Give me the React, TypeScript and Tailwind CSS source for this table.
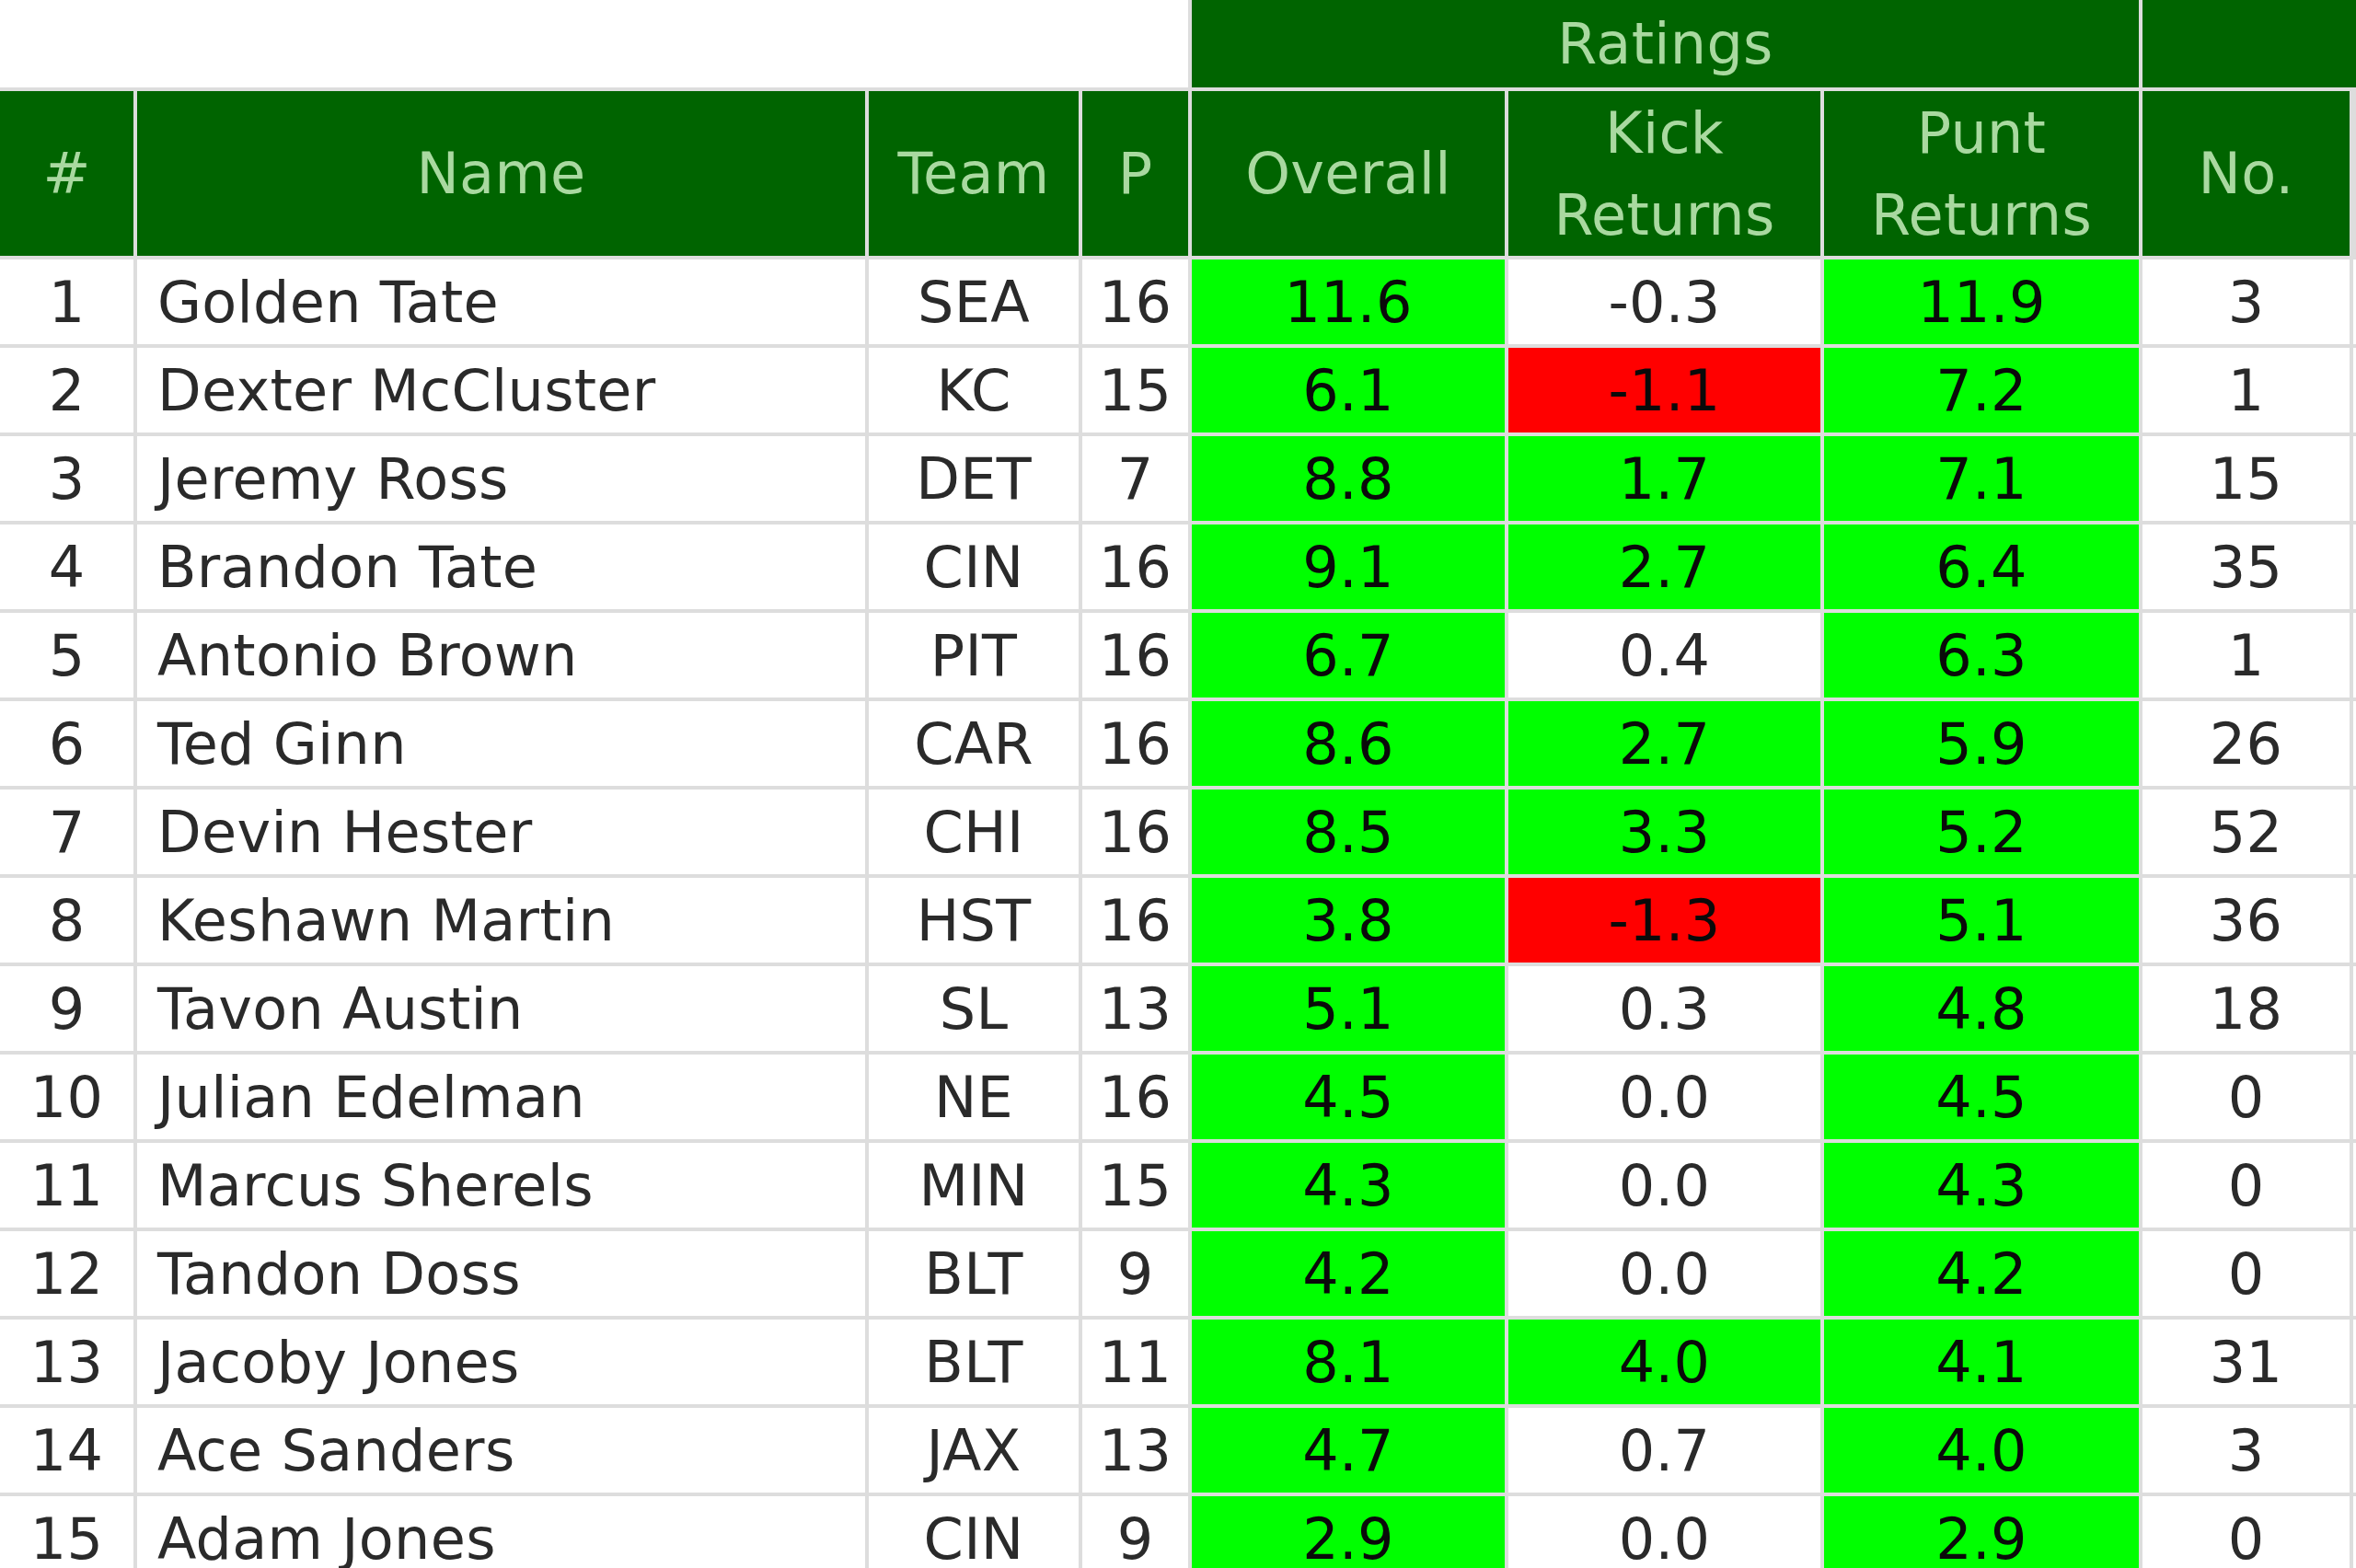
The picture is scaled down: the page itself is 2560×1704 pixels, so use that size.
import React from 'react'

interface Row {
  rank: number
  name: string
  team: string
  p: number
  overall: string
  kick: string
  punt: string
  no: number
}

const rows: Row[] = [
  { rank: 1, name: 'Golden Tate', team: 'SEA', p: 16, overall: '11.6', kick: '-0.3', punt: '11.9', no: 3 },
  { rank: 2, name: 'Dexter McCluster', team: 'KC', p: 15, overall: '6.1', kick: '-1.1', punt: '7.2', no: 1 },
  { rank: 3, name: 'Jeremy Ross', team: 'DET', p: 7, overall: '8.8', kick: '1.7', punt: '7.1', no: 15 },
  { rank: 4, name: 'Brandon Tate', team: 'CIN', p: 16, overall: '9.1', kick: '2.7', punt: '6.4', no: 35 },
  { rank: 5, name: 'Antonio Brown', team: 'PIT', p: 16, overall: '6.7', kick: '0.4', punt: '6.3', no: 1 },
  { rank: 6, name: 'Ted Ginn', team: 'CAR', p: 16, overall: '8.6', kick: '2.7', punt: '5.9', no: 26 },
  { rank: 7, name: 'Devin Hester', team: 'CHI', p: 16, overall: '8.5', kick: '3.3', punt: '5.2', no: 52 },
  { rank: 8, name: 'Keshawn Martin', team: 'HST', p: 16, overall: '3.8', kick: '-1.3', punt: '5.1', no: 36 },
  { rank: 9, name: 'Tavon Austin', team: 'SL', p: 13, overall: '5.1', kick: '0.3', punt: '4.8', no: 18 },
  { rank: 10, name: 'Julian Edelman', team: 'NE', p: 16, overall: '4.5', kick: '0.0', punt: '4.5', no: 0 },
  { rank: 11, name: 'Marcus Sherels', team: 'MIN', p: 15, overall: '4.3', kick: '0.0', punt: '4.3', no: 0 },
  { rank: 12, name: 'Tandon Doss', team: 'BLT', p: 9, overall: '4.2', kick: '0.0', punt: '4.2', no: 0 },
  { rank: 13, name: 'Jacoby Jones', team: 'BLT', p: 11, overall: '8.1', kick: '4.0', punt: '4.1', no: 31 },
  { rank: 14, name: 'Ace Sanders', team: 'JAX', p: 13, overall: '4.7', kick: '0.7', punt: '4.0', no: 3 },
  { rank: 15, name: 'Adam Jones', team: 'CIN', p: 9, overall: '2.9', kick: '0.0', punt: '2.9', no: 0 },
]

// rating cell colour: good is lime, bad is red, neutral stays white
function ratingBg(v: string) {
  const n = parseFloat(v)
  if (n >= 1) return 'bg-[#00ff00] text-[#0a0a0a]'
  if (n <= -1) return 'bg-[#ff0000] text-[#0a0a0a]'
  return 'bg-white text-[#2a2a2a]'
}

const head = 'bg-[#006400] text-[#a9d9a0] flex items-center justify-center text-center leading-[89px]'
const cell = 'flex items-center justify-center'

export default function App() {
  return (
    <div
      className="w-[2560px] h-[1704px] overflow-hidden bg-white"
      style={{ fontFamily: '"DejaVu Sans", Verdana, sans-serif' }}
    >
      <div className="grid grid-cols-[145px_791px_228px_115px_340px_339px_342px_225px_200px] grid-rows-[95px_179px_repeat(15,92px)] gap-[4px] bg-[#dddddd] text-[62px] tracking-[0.3px] w-max">
        {/* group header row */}
        <div className="col-span-4 bg-white" />
        <div className={`col-span-3 ${head}`}>Ratings</div>
        <div className={`col-span-2 ${head}`} />

        {/* column headers */}
        <div className={head}>#</div>
        <div className={head}>Name</div>
        <div className={head}>Team</div>
        <div className={head}>P</div>
        <div className={head}>Overall</div>
        <div className={head}>Kick<br />Returns</div>
        <div className={head}>Punt<br />Returns</div>
        <div className={head}>No.</div>
        <div className="bg-[#dddddd]" />

        {rows.map(r => (
          <React.Fragment key={r.rank}>
            <div className={`${cell} bg-white text-[#2a2a2a]`}>{r.rank}</div>
            <div className="flex items-center bg-white text-[#2a2a2a] pl-[22px]">{r.name}</div>
            <div className={`${cell} bg-white text-[#2a2a2a]`}>{r.team}</div>
            <div className={`${cell} bg-white text-[#2a2a2a]`}>{r.p}</div>
            <div className={`${cell} bg-[#00ff00] text-[#0a0a0a]`}>{r.overall}</div>
            <div className={`${cell} ${ratingBg(r.kick)}`}>{r.kick}</div>
            <div className={`${cell} bg-[#00ff00] text-[#0a0a0a]`}>{r.punt}</div>
            <div className={`${cell} bg-white text-[#2a2a2a]`}>{r.no}</div>
            <div className="bg-white" />
          </React.Fragment>
        ))}
      </div>
    </div>
  )
}
